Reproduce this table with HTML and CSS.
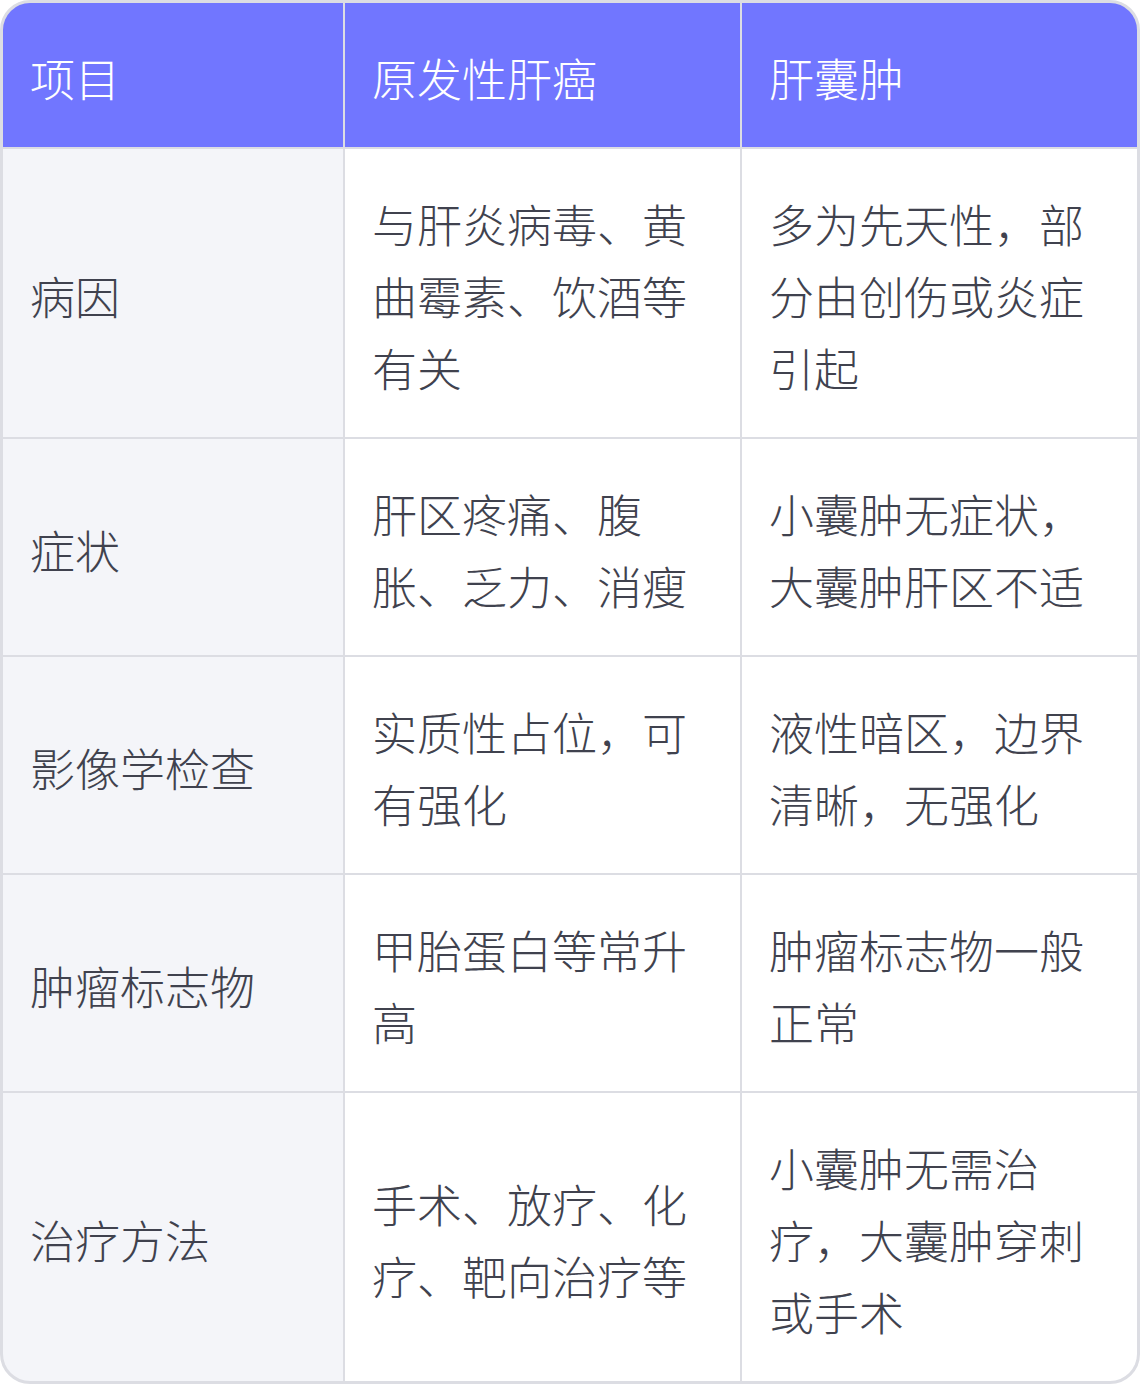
FILE: index.html
```html
<!DOCTYPE html>
<html lang="zh-CN">
<head>
<meta charset="utf-8">
<title>原发性肝癌与肝囊肿对比</title>
<link rel="stylesheet" href="styles.css">
</head>
<body>
<div class="table" role="table">
  <div class="cell head" role="columnheader">项目</div>
  <div class="cell head" role="columnheader">原发性肝癌</div>
  <div class="cell head" role="columnheader">肝囊肿</div>

  <div class="cell label" role="rowheader">病因</div>
  <div class="cell" role="cell">与肝炎病毒、黄曲霉素、饮酒等有关</div>
  <div class="cell" role="cell">多为先天性，部分由创伤或炎症引起</div>

  <div class="cell label" role="rowheader">症状</div>
  <div class="cell" role="cell">肝区疼痛、腹胀、乏力、消瘦</div>
  <div class="cell" role="cell">小囊肿无症状，大囊肿肝区不适</div>

  <div class="cell label" role="rowheader">影像学检查</div>
  <div class="cell" role="cell">实质性占位，可有强化</div>
  <div class="cell" role="cell">液性暗区，边界清晰，无强化</div>

  <div class="cell label" role="rowheader">肿瘤标志物</div>
  <div class="cell" role="cell">甲胎蛋白等常升高</div>
  <div class="cell" role="cell">肿瘤标志物一般正常</div>

  <div class="cell label" role="rowheader">治疗方法</div>
  <div class="cell" role="cell">手术、放疗、化疗、靶向治疗等</div>
  <div class="cell" role="cell">小囊肿无需治疗，大囊肿穿刺或手术</div>
</div>
</body>
</html>
```
FILE: styles.css
```css
html, body {
  margin: 0;
  padding: 0;
  background: #ffffff;
}

.table {
  width: 1140px;
  height: 1384px;
  box-sizing: border-box;
  border: 3px solid #dcdde3;
  border-radius: 30px;
  overflow: hidden;
  background: #dcdde3;
  display: grid;
  grid-template-columns: 340px 395px 395px;
  grid-auto-rows: auto;
  gap: 2px;
  font-family: "Noto Sans CJK SC", "Noto Sans", sans-serif;
  font-weight: 300;
  font-size: 45px;
  line-height: 72px;
  color: #40424e;
}

.cell {
  background: #ffffff;
  padding: 39px 28px 33px 27px;
  display: flex;
  align-items: center;
  word-break: break-all;
}

.head {
  background: #7176ff;
  color: #ffffff;
}

.label {
  background: #f4f5f9;
}
```
